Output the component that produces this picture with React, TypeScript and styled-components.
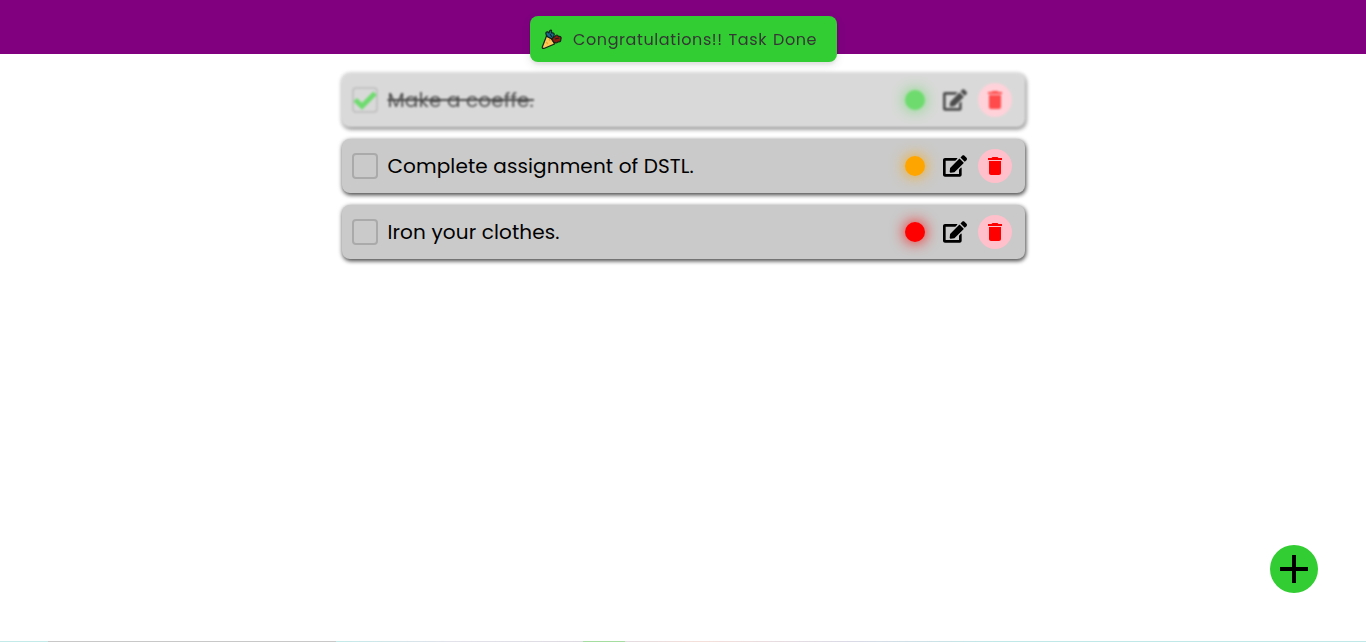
import React from 'react';
import styled, { createGlobalStyle } from 'styled-components';
import { FaEdit } from 'react-icons/fa';
import { MdDelete } from 'react-icons/md';

const GlobalStyle = createGlobalStyle`
  * { box-sizing: border-box; }
  body { margin: 0; background: #fff; color: #000; font-family: Poppins, Inter, "Noto Sans", sans-serif; overflow: hidden; }
`;

const Page = styled.div`
  height: 642px;
  display: flex;
  flex-direction: column;
`;

const Header = styled.header`
  height: 54px;
  flex: none;
  background: purple;
`;

const Toast = styled.div`
  position: fixed;
  z-index: 5;
  top: 16px;
  left: 530px;
  width: 307px;
  height: 46px;
  display: flex;
  align-items: center;
  padding-left: 11px;
  gap: 11px;
  border-radius: 8px;
  background: limegreen;
  color: #363636;
  box-shadow: 0 3px 10px rgba(0, 0, 0, 0.1), 0 3px 3px rgba(0, 0, 0, 0.05);
`;

const ToastText = styled.span`
  font-size: 16px;
  line-height: 21px;
  letter-spacing: 0.6px;
  word-spacing: 1.1px;
  white-space: nowrap;
`;

const List = styled.ul`
  list-style: none;
  width: 50%;
  margin: 19px auto 0;
  padding: 0;
  display: flex;
  flex-direction: column;
  gap: 12px;
  flex: 1;
`;

const Row = styled.li<{ $done?: boolean }>`
  height: 54px;
  display: flex;
  align-items: center;
  padding: 0 13px 0 10px;
  border-radius: 8px;
  background: #cacaca;
  box-shadow: 0 1px 5px rgba(0, 0, 0, 0.3), 1px 2px 4px rgba(0, 0, 0, 0.6);
  ${({ $done }) => $done && 'opacity: 0.7; filter: blur(1px);'}
`;

const Checkbox = styled.span`
  width: 26px;
  height: 26px;
  flex: none;
  display: flex;
  align-items: center;
  justify-content: center;
  border: 2px solid #aaa;
  border-radius: 4px;
`;

const CheckMark = styled.svg`
  width: 24px;
  height: 24px;
  flex: none;
`;

const Label = styled.span<{ $done?: boolean }>`
  margin-left: 10px;
  flex: 1;
  font-size: 20px;
  line-height: 30px;
  letter-spacing: 0.12px;
  white-space: nowrap;
  > span { text-decoration: ${({ $done }) => ($done ? 'line-through' : 'none')}; }
`;

const Priority = styled.span<{ $color: string }>`
  width: 20px;
  height: 20px;
  border-radius: 50%;
  margin-right: 18px;
  background: ${({ $color }) => $color};
  box-shadow: 0 0 15px ${({ $color }) => $color};
`;

const EditIcon = styled(FaEdit)`
  width: 24px;
  height: 24px;
  margin-right: 11px;
`;

const DeleteButton = styled.span`
  width: 34px;
  height: 34px;
  border-radius: 50%;
  display: flex;
  align-items: center;
  justify-content: center;
  background: pink;
  color: red;
`;

const AddButton = styled.button`
  position: fixed;
  right: 48px;
  bottom: 49px;
  width: 48px;
  height: 48px;
  padding: 0;
  border: 0;
  border-radius: 50%;
  display: flex;
  align-items: center;
  justify-content: center;
  background: limegreen;
`;

const BottomEdge = styled.div`
  height: 1px;
  flex: none;
  background: linear-gradient(90deg, #c3e9e9 0 48px, #c8c8c8 48px 336px, #c3e9e9 336px, #e2e2ea 450px, #dedae2 583px, #a5dca0 583px 625px, #e2dce0 625px, #f5dfda 700px, #dadae6 850px, #c0e8e8 1000px);
`;

const PartyPopper = () => (
  <svg width="21" height="22" viewBox="0 0 21 22">
    <g stroke="#14221a" strokeWidth="1.2" strokeLinejoin="round">
      <path d="M5.5 8 1.2 19.2Q1.2 21 3.5 20.2L13.5 16Q11.5 10.5 5.5 8Z" fill="#ffc857" />
      <path d="M7 9C4 7 4.5 3.5 6.5 3.8L8 5Q8.5 1.5 10.5 2.2L10.5 5Q14 4.5 13 7.5L11.5 11Z" fill="#176b91" />
      <path d="M12.5 14C10 10.5 12 9.5 14 8.5Q16 5.5 17.5 8.5Q21 8 19.8 11.5Q20 14.5 17 13.8Q15 16 12.5 14Z" fill="#8e1b10" />
    </g>
    <path d="m5 14 2 2m1-5 1 2" stroke="#efa52e" strokeWidth="1.2" />
    <path d="m9 6 2 3m3 2 4-1" stroke="#14221a" strokeWidth="1.2" />
  </svg>
);

const tasks = [
  { text: 'Make a coeffe.', color: 'limegreen', done: true },
  { text: 'Complete assignment of DSTL.', color: 'orange', done: false },
  { text: 'Iron your clothes.', color: 'red', done: false },
];

export default function App() {
  return (
    <Page>
      <GlobalStyle />
      <Header />
      <Toast>
        <PartyPopper />
        <ToastText>Congratulations!! Task Done</ToastText>
      </Toast>
      <List>
        {tasks.map(({ text, color, done }) => (
          <Row key={text} $done={done}>
            <Checkbox>
              {done && (
                <CheckMark viewBox="0 0 24 24">
                  <path d="M2.2 11.8 9 18.2 22 5.3" fill="none" stroke="limegreen" strokeWidth="5" />
                </CheckMark>
              )}
            </Checkbox>
            <Label $done={done}><span>{text}</span></Label>
            <Priority $color={color} />
            <EditIcon />
            <DeleteButton><MdDelete size={24} /></DeleteButton>
          </Row>
        ))}
      </List>
      <BottomEdge />
      <AddButton aria-label="Add task">
        <svg width="28" height="28" viewBox="0 0 28 28"><path d="M14 0V28M0 14H28" stroke="#000" strokeWidth="4" /></svg>
      </AddButton>
    </Page>
  );
}
